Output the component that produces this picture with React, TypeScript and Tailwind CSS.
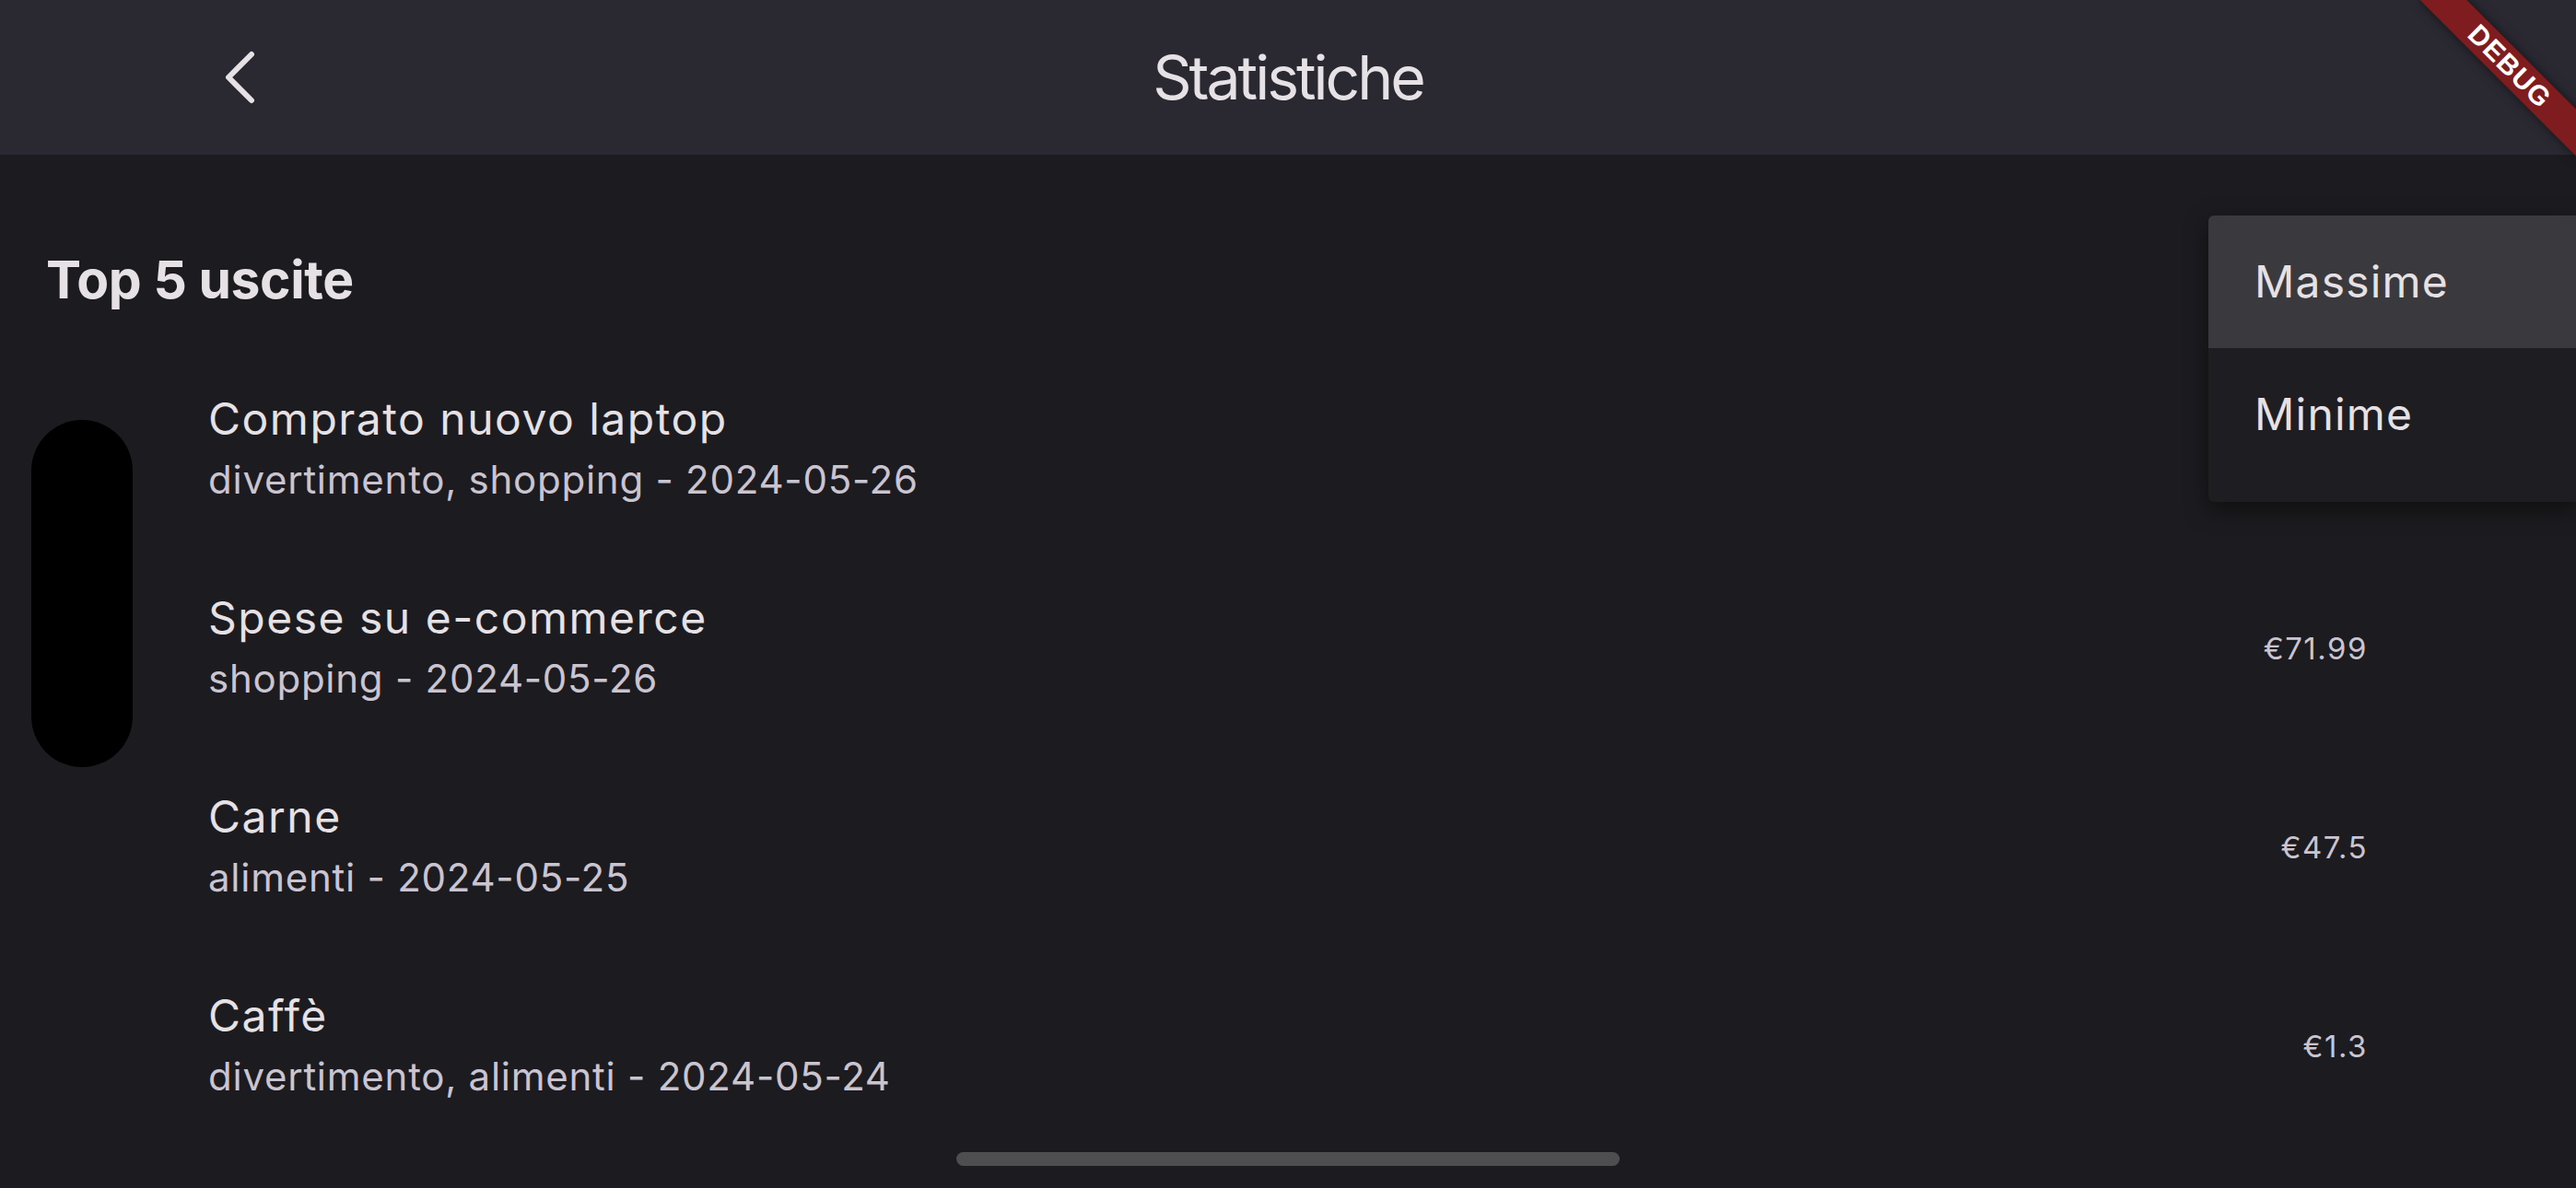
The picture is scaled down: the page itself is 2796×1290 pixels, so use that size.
import React from "react";

type Expense = {
  title: string;
  subtitle: string;
  amount?: string;
};

// first amount sits under the open popup menu, so it isn't drawn
const expenses: Expense[] = [
  {
    title: "Comprato nuovo laptop",
    subtitle: "divertimento, shopping - 2024-05-26",
  },
  {
    title: "Spese su e-commerce",
    subtitle: "shopping - 2024-05-26",
    amount: "€71.99",
  },
  { title: "Carne", subtitle: "alimenti - 2024-05-25", amount: "€47.5" },
  {
    title: "Caffè",
    subtitle: "divertimento, alimenti - 2024-05-24",
    amount: "€1.3",
  },
];

const BackChevron: React.FC = () => (
  <svg width="36" height="62" viewBox="0 0 36 62" fill="none">
    <polyline
      points="30,6 5,31 30,56"
      stroke="#e6e1e5"
      strokeWidth="6"
      strokeLinecap="round"
      strokeLinejoin="round"
    />
  </svg>
);

const ExpenseRow: React.FC<{ expense: Expense }> = ({ expense }) => (
  <div className="h-[216px] flex items-center pl-[226px] pr-[226px]">
    <div className="flex flex-col pb-[6px]">
      <span className="text-[48px] leading-[72px] tracking-[1.5px] text-[#e6e1e5]">
        {expense.title}
      </span>
      <span className="text-[42px] leading-[60px] tracking-[0.75px] text-[#cac4d0]">
        {expense.subtitle}
      </span>
    </div>
    {expense.amount && (
      <span className="ml-auto text-[33px] leading-[48px] tracking-[1.5px] text-[#cac4d0]">
        {expense.amount}
      </span>
    )}
  </div>
);

export default function App() {
  return (
    <div
      className="relative w-[2796px] h-[1290px] overflow-hidden bg-[#1c1b1f]"
      style={{ fontFamily: "Inter, 'Noto Sans', sans-serif" }}
    >
      {/* App bar */}
      <header className="h-[168px] bg-[#2a2831] grid grid-cols-[1fr_auto_1fr] items-center">
        <div className="pl-[243px] flex items-center">
          <BackChevron />
        </div>
        <h1 className="text-[66px] leading-[80px] text-[#e6e1e5] tracking-[-3px]">
          Statistiche
        </h1>
        <div />
      </header>

      {/* Section title */}
      <h2 className="pt-[101px] pl-[50px] text-[57px] leading-[70px] font-bold tracking-[-0.4px] text-[#e6e1e5]">
        Top 5 uscite
      </h2>

      {/* List */}
      <div className="mt-[41px] flex flex-col">
        {expenses.map((e) => (
          <ExpenseRow key={e.title} expense={e} />
        ))}
      </div>

      {/* Popup menu */}
      <div className="absolute top-[234px] right-0 w-[399px] pb-[23px] bg-[#1e1d22] rounded-l-[6px] shadow-[0_8px_24px_rgba(0,0,0,0.5)] flex flex-col">
        <div className="h-[144px] bg-[#3a393e] rounded-tl-[6px] flex items-center pl-[50px] text-[48px] tracking-[1.2px] text-[#e6e1e5]">
          Massime
        </div>
        <div className="h-[144px] flex items-center pl-[50px] text-[48px] tracking-[1.2px] text-[#e6e1e5]">
          Minime
        </div>
      </div>

      {/* Camera cutout */}
      <div className="absolute left-[34px] top-[456px] w-[110px] h-[377px] rounded-full bg-black" />

      {/* Home indicator */}
      <div className="absolute left-[1038px] top-[1251px] w-[720px] h-[15px] rounded-full bg-[#4e4e50]" />

      {/* Debug banner */}
      <div className="absolute top-0 right-0 w-[240px] h-[240px] overflow-hidden pointer-events-none">
        <div
          className="absolute left-[48px] top-[54px] w-[240px] h-[36px] rotate-45 bg-[#7e1c20] shadow-[0_0_12px_rgba(0,0,0,0.5)] flex items-center justify-center text-white text-[30px] font-black leading-none tracking-[1px]"
          style={{ fontFamily: "'Liberation Sans', Arial, sans-serif" }}
        >
          DEBUG
        </div>
      </div>
    </div>
  );
}
